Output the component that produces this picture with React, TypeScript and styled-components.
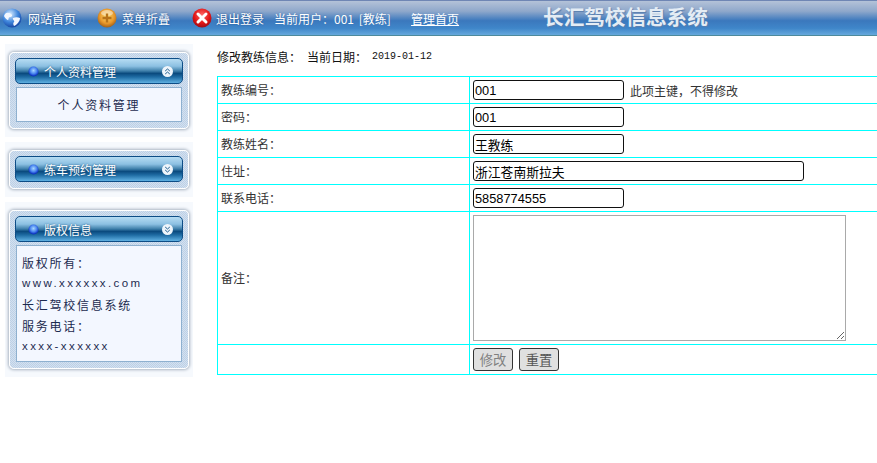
import React from 'react'
import styled, { createGlobalStyle } from 'styled-components'

const GlobalStyle = createGlobalStyle`
    html, body {
        margin: 0;
        padding: 0;
        background: #fff;
        overflow: hidden;
    }
    body {
        font-family: "Noto Sans CJK SC", "Liberation Sans", sans-serif;
        font-size: 12px;
        color: #222;
    }
`

const Page = styled.div`
    width: 877px;
    height: 463px;
    overflow: hidden;
`

const Header = styled.header`
    height: 36px;
    display: flex;
    align-items: center;
    box-sizing: border-box;
    border-top: 1px solid #6f86b4;
    border-bottom: 1px solid #4d8a9c;
    background: linear-gradient(180deg, #b4c2d8 0%, #8fa8cb 30%, #3b78bd 58%, #3f86c9 80%, #66a8dc 100%);
    color: #fff;
    white-space: nowrap;
`

const NavLink = styled.a<{ $left: number; $gap: number }>`
    display: flex;
    align-items: center;
    gap: ${(p) => p.$gap}px;
    margin-left: ${(p) => p.$left}px;
    font-size: 12px;
    text-shadow: 0 0 2px #1c4a86;
`

const UserInfo = styled.span`
    margin-left: 10px;
    font-size: 12px;
    width: 137px;
    word-spacing: 2px;
    text-shadow: 0 0 1px #3a6ea8;
`

const HomeLink = styled.a`
    font-size: 12px;
    text-decoration: underline;
    width: 132px;
`

const SiteTitle = styled.h1`
    margin: 0 0 4px;
    font-size: 20.6px;
    font-weight: 700;
    color: #e4ecf4;
    text-shadow: 1px 1px 1px #5a7fae;
`

const Content = styled.div`
    display: flex;
    align-items: flex-start;
`

const Sidebar = styled.aside`
    width: 188px;
    margin-left: 5px;
    padding-top: 8px;
    flex-shrink: 0;
    display: flex;
    flex-direction: column;
    gap: 5px;
`

const PanelBlock = styled.section`
    background: #f6f9fd;
    padding: 8px 4px;
`

const PanelFrame = styled.div`
    border: 1px solid #fff;
    border-radius: 5px;
    padding: 5px 5px 6px;
    background: repeating-conic-gradient(#bdd0e6 0 25%, #d3e1f0 0 50%) 0 0 / 2px 2px;
    box-shadow: 0 0 3px 1px #a9b4c2;
`

const PanelBar = styled.div`
    height: 26px;
    box-sizing: border-box;
    display: flex;
    align-items: center;
    gap: 5px;
    padding: 0 9px 0 12px;
    border: 1px solid #0d4d86;
    border-radius: 5px;
    color: #fff;
    font-size: 12px;
    background: linear-gradient(180deg, #b6dcf3 0%, #8cc0e2 30%, #3d7ea9 50%, #0a4a7e 60%, #1e6ba3 75%, #5fb0e2 100%);
    text-shadow: 0 0 2px #15507f;
`

const PanelTitle = styled.span`
    flex: 1;
`

const PanelBody = styled.div`
    margin: 3px 1px 0;
    border: 1px solid #8eb0cf;
    background: #f3f7ff;
    color: #1c2b4f;
`

const ProfileLink = styled.div`
    height: 33px;
    display: flex;
    align-items: center;
    justify-content: center;
    letter-spacing: 1.8px;
`

const CopyrightBody = styled.div`
    padding: 6px 5px 0;
    height: 109px;
`

const CopyrightLine = styled.div<{ $wide?: boolean }>`
    height: 21px;
    line-height: 21px;
    white-space: nowrap;
    letter-spacing: ${(p) => (p.$wide ? '2.4px' : '1.75px')};
    font-family: ${(p) => (p.$wide ? '"Liberation Sans", sans-serif' : 'inherit')};
    font-size: ${(p) => (p.$wide ? '11.5px' : '12px')};
`

const Main = styled.main`
    margin-left: 24px;
    flex: 1;
    min-width: 0;
`

const Heading = styled.div`
    height: 40px;
    display: flex;
    align-items: center;
    font-size: 12px;
    color: #111;
`

const HeadingDate = styled.span`
    margin-left: 6px;
`

const DateValue = styled.span`
    margin-left: 5px;
    font-family: "Liberation Mono", monospace;
    font-size: 10px;
`

const FormTable = styled.table`
    border-collapse: collapse;
    width: 700px;
    table-layout: fixed;
`

const Row = styled.tr<{ $height?: number }>`
    height: ${(p) => p.$height ?? 27}px;
`

const LabelCell = styled.td`
    width: 252px;
    box-sizing: border-box;
    border: 1px solid #00ffff;
    padding: 0 3px 2px;
    color: #333;
`

const FieldCell = styled.td`
    border: 1px solid #00ffff;
    padding: 0 3px;
    color: #333;
`

const FieldInner = styled.div`
    display: flex;
    align-items: center;
`

const TextInput = styled.input<{ $width: number }>`
    width: ${(p) => p.$width}px;
    height: 20px;
    box-sizing: border-box;
    padding: 0 1px;
    border: 1px solid #111;
    border-radius: 3px;
    background: #fff;
    color: #000;
    font-family: "Liberation Sans", "Noto Sans CJK SC", sans-serif;
    font-size: 12.8px;
    outline: none;
`

const Hint = styled.span`
    margin-left: 6px;
`

const Notes = styled.textarea`
    display: block;
    width: 373px;
    height: 126px;
    box-sizing: border-box;
    border: 1px solid #a9a9a9;
    padding: 2px;
    margin: 0;
    background: #fff;
`

const Buttons = styled.div`
    display: flex;
    gap: 6px;
`

const ActionButton = styled.button<{ $muted?: boolean }>`
    width: 40px;
    height: 23px;
    padding: 0;
    border: 1px solid #333;
    border-radius: 3px;
    background: #e0e0e0;
    color: ${(p) => (p.$muted ? '#808080' : '#555')};
    font-family: "Noto Sans CJK SC", sans-serif;
    font-size: 13.3px;
`

const GlobeIcon = () => (
    <svg width="20" height="20" viewBox="0 0 20 20">
        <defs>
            <radialGradient id="globe" cx="40%" cy="30%" r="75%">
                <stop offset="0%" stopColor="#d8ecff" />
                <stop offset="55%" stopColor="#3f86dc" />
                <stop offset="100%" stopColor="#123f9c" />
            </radialGradient>
        </defs>
        <circle cx="10" cy="10" r="9.5" fill="url(#globe)" />
        <path d="M3 6c2-2 4-1 6 0s1 3-1 3-1 3-2 3-3-2-4-4zM11 10c2-1 5-1 7 0 0 3-3 7-6 8-1-2-1-3 0-4s-2-3-1-4z" fill="#f2f7ff" />
    </svg>
)

const PlusIcon = () => (
    <svg width="20" height="20" viewBox="0 0 20 20">
        <defs>
            <radialGradient id="plus" cx="50%" cy="40%" r="65%">
                <stop offset="0%" stopColor="#ffdf70" />
                <stop offset="60%" stopColor="#e8972a" />
                <stop offset="100%" stopColor="#8f5314" />
            </radialGradient>
        </defs>
        <circle cx="10" cy="10" r="9.5" fill="url(#plus)" />
        <ellipse cx="10" cy="5" rx="6" ry="3" fill="#fff" opacity="0.45" />
        <path d="M8.8 5.5h2.4v3.3h3.3v2.4h-3.3v3.3H8.8v-3.3H5.5V8.8h3.3z" fill="#b8741a" />
    </svg>
)

const CloseIcon = () => (
    <svg width="20" height="20" viewBox="0 0 20 20">
        <defs>
            <radialGradient id="close" cx="50%" cy="35%" r="70%">
                <stop offset="0%" stopColor="#ff6a6a" />
                <stop offset="60%" stopColor="#e01414" />
                <stop offset="100%" stopColor="#8e0a18" />
            </radialGradient>
        </defs>
        <circle cx="10" cy="10" r="9.5" fill="url(#close)" />
        <path d="M6 6l8 8M14 6l-8 8" stroke="#fff" strokeWidth="3" strokeLinecap="round" />
    </svg>
)

const Bullet = () => (
    <svg width="11" height="11" viewBox="0 0 11 11">
        <defs>
            <radialGradient id="bullet" cx="50%" cy="40%" r="55%">
                <stop offset="0%" stopColor="#a8d8ff" />
                <stop offset="60%" stopColor="#4a86f0" />
                <stop offset="100%" stopColor="#0c2fc0" />
            </radialGradient>
        </defs>
        <circle cx="5.5" cy="5.5" r="5" fill="url(#bullet)" />
    </svg>
)

const Chevrons = ({ up }: { up?: boolean }) => (
    <svg width="11" height="11" viewBox="0 0 11 11">
        <circle cx="5.5" cy="5.5" r="5.5" fill="#eef5fb" />
        <path
            d={up ? 'M3.2 5l2.3-2 2.3 2M3.2 8l2.3-2 2.3 2' : 'M3.2 3l2.3 2 2.3-2M3.2 6l2.3 2 2.3-2'}
            fill="none"
            stroke="#1c5c8e"
            strokeWidth="1"
        />
    </svg>
)

type PanelProps = {
    title: string
    up?: boolean
    children?: React.ReactNode
}

const Panel = ({ title, up, children }: PanelProps) => (
    <PanelBlock>
        <PanelFrame>
            <PanelBar>
                <Bullet />
                <PanelTitle>{title}</PanelTitle>
                <Chevrons up={up} />
            </PanelBar>
            {children && <PanelBody>{children}</PanelBody>}
        </PanelFrame>
    </PanelBlock>
)

const fields = [
    { label: '密码：', value: '001', width: 151 },
    { label: '教练姓名：', value: '王教练', width: 151 },
    { label: '住址：', value: '浙江苍南斯拉夫', width: 331 },
    { label: '联系电话：', value: '5858774555', width: 151 },
]

const App = () => (
    <Page>
        <GlobalStyle />
        <Header>
            <NavLink $left={2} $gap={6}>
                <GlobeIcon />
                网站首页
            </NavLink>
            <NavLink $left={21} $gap={5}>
                <PlusIcon />
                菜单折叠
            </NavLink>
            <NavLink $left={22} $gap={4}>
                <CloseIcon />
                退出登录
            </NavLink>
            <UserInfo>当前用户：001 [教练]</UserInfo>
            <HomeLink>管理首页</HomeLink>
            <SiteTitle>长汇驾校信息系统</SiteTitle>
        </Header>
        <Content>
            <Sidebar>
                <Panel title="个人资料管理" up>
                    <ProfileLink>个人资料管理</ProfileLink>
                </Panel>
                <Panel title="练车预约管理" />
                <Panel title="版权信息">
                    <CopyrightBody>
                        <CopyrightLine>版权所有：</CopyrightLine>
                        <CopyrightLine $wide>www.xxxxxx.com</CopyrightLine>
                        <CopyrightLine>长汇驾校信息系统</CopyrightLine>
                        <CopyrightLine>服务电话：</CopyrightLine>
                        <CopyrightLine $wide>xxxx-xxxxxx</CopyrightLine>
                    </CopyrightBody>
                </Panel>
            </Sidebar>
            <Main>
                <Heading>
                    修改教练信息：
                    <HeadingDate>当前日期：</HeadingDate>
                    <DateValue>2019-01-12</DateValue>
                </Heading>
                <FormTable>
                    <tbody>
                        <Row>
                            <LabelCell>教练编号：</LabelCell>
                            <FieldCell>
                                <FieldInner>
                                    <TextInput $width={151} defaultValue="001" />
                                    <Hint>此项主键，不得修改</Hint>
                                </FieldInner>
                            </FieldCell>
                        </Row>
                        {fields.map((field) => (
                            <Row key={field.label}>
                                <LabelCell>{field.label}</LabelCell>
                                <FieldCell>
                                    <FieldInner>
                                        <TextInput $width={field.width} defaultValue={field.value} />
                                    </FieldInner>
                                </FieldCell>
                            </Row>
                        ))}
                        <Row $height={133}>
                            <LabelCell>备注：</LabelCell>
                            <FieldCell>
                                <Notes />
                            </FieldCell>
                        </Row>
                        <Row $height={30}>
                            <LabelCell />
                            <FieldCell>
                                <Buttons>
                                    <ActionButton $muted>修改</ActionButton>
                                    <ActionButton>重置</ActionButton>
                                </Buttons>
                            </FieldCell>
                        </Row>
                    </tbody>
                </FormTable>
            </Main>
        </Content>
    </Page>
)

export default App
